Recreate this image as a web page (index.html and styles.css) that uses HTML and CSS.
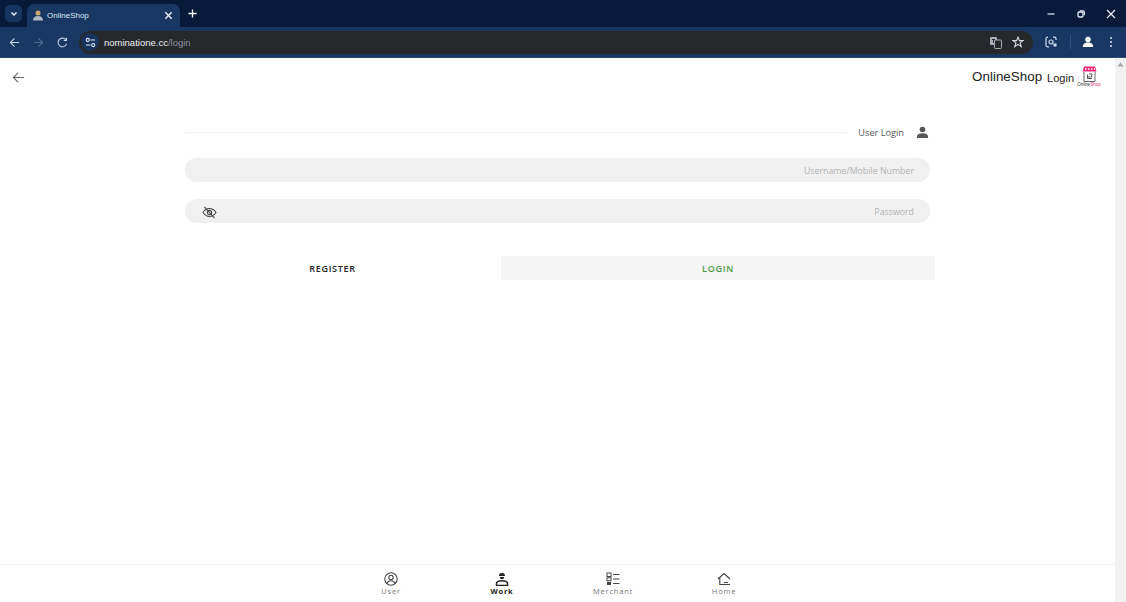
FILE: index.html
```html
<!DOCTYPE html>
<html lang="en">
<head>
<meta charset="utf-8">
<title>OnlineShop</title>
<link rel="stylesheet" href="styles.css">
</head>
<body>
<div class="browser">
  <div class="tabstrip">
    <div class="tab-search"><svg width="10" height="10" viewBox="0 0 10 10"><path d="M2.500 3.500 5 6 7.500 3.500" fill="none" stroke="#e8eefa" stroke-width="1.500"/></svg></div>
    <div class="tab">
      <svg class="favicon" width="10" height="11" viewBox="0 0 10 11"><circle cx="5" cy="3" r="2.500" fill="#c9a66b"/><path d="M0 10.500C0 7.500 2 6 5 6s5 1.500 5 4.500z" fill="#aeb7c4"/></svg>
      <span class="tab-title">OnlineShop</span>
      <svg class="tab-close" width="9" height="9" viewBox="0 0 10 10"><path d="M1.500 1.500 8.500 8.500M8.500 1.500 1.500 8.500" stroke="#f0f4fb" stroke-width="1.500"/></svg>
    </div>
    <svg class="tab-new" width="9" height="9" viewBox="0 0 10 10"><path d="M5 .5v9M.5 5h9" stroke="#fff" stroke-width="1.500"/></svg>
    <div class="win-controls">
      <svg width="10" height="10" viewBox="0 0 10 10"><path d="M1.500 5h7" stroke="#e8eefa" stroke-width="1.200"/></svg>
      <svg width="10" height="10" viewBox="0 0 10 10"><rect x="2" y="3" width="5" height="5" rx="1.200" fill="none" stroke="#e8eefa" stroke-width="1.300"/><path d="M3.800 1.800h3a1.500 1.500 0 0 1 1.500 1.500v3" fill="none" stroke="#e8eefa" stroke-width="1.200"/></svg>
      <svg width="10" height="10" viewBox="0 0 10 10"><path d="M1 1 9 9M9 1 1 9" stroke="#e8eefa" stroke-width="1.200"/></svg>
    </div>
  </div>
  <div class="toolbar">
    <svg class="tb-icon nav" width="11" height="11" viewBox="0 0 12 12"><path d="M11 6H1.500M6 1.500 1.500 6 6 10.500" fill="none" stroke="#c8d4e8" stroke-width="1.200"/></svg>
    <svg class="tb-icon nav" width="11" height="11" viewBox="0 0 12 12"><path d="M1 6h9.500M6 1.500 10.500 6 6 10.500" fill="none" stroke="#4f6a92" stroke-width="1.200"/></svg>
    <svg class="tb-icon nav reload" width="11" height="11" viewBox="0 0 12 12"><path d="M10.400 7.500A4.700 4.700 0 1 1 9.500 2.800M10.300 .8v3h-3" fill="none" stroke="#c8d4e8" stroke-width="1.200"/></svg>
    <div class="omnibox">
      <span class="site-chip"><svg width="11" height="11" viewBox="0 0 12 12"><circle cx="3" cy="3.200" r="1.700" fill="none" stroke="#e8eefa" stroke-width="1.100"/><path d="M6 3.200h5M1 8.800h5" stroke="#e8eefa" stroke-width="1.200"/><circle cx="9" cy="8.800" r="1.700" fill="none" stroke="#e8eefa" stroke-width="1.100"/></svg></span>
      <span class="url">nominatione.cc<span class="url-path">/login</span></span>
      <svg class="omni-icon translate" width="13" height="13" viewBox="0 0 13 13"><rect x="1" y="1" width="7" height="8" rx="1" fill="#a8aeb8"/><rect x="5.500" y="4" width="7" height="8.500" rx="1" fill="#26282c" stroke="#a8aeb8"/><path d="M3 3.500h3M4.500 3v4" stroke="#2a2c30"/></svg>
      <svg class="omni-icon star" width="12" height="12" viewBox="0 0 13 13"><path d="M6.500 1.200 8 5h4l-3.200 2.500 1.200 4-3.500-2.400L3 11.500l1.200-4L1 5h4z" fill="none" stroke="#d8dce4" stroke-width="1.200"/></svg>
    </div>
    <svg class="tb-icon ext" width="12" height="12" viewBox="0 0 12 12"><path d="M3 1.200H2.500A1.500 1.500 0 0 0 1 2.700v6.600a1.500 1.500 0 0 0 1.500 1.500H4M8 1.200h1.500A1.500 1.500 0 0 1 11 2.700V4" fill="none" stroke="#cfdcf2" stroke-width="1.200"/><circle cx="6" cy="6" r="2" fill="none" stroke="#cfdcf2" stroke-width="1.200"/><path d="M8.500 7.500h3v3h-3z" fill="#cfdcf2"/></svg>
    <span class="tb-sep"></span>
    <svg class="tb-icon profile" width="12" height="12" viewBox="0 0 12 12"><circle cx="6" cy="3.500" r="2.700" fill="#fff"/><path d="M.8 11c0-3 2.400-4.400 5.200-4.400s5.200 1.400 5.200 4.400z" fill="#fff"/></svg>
    <svg class="tb-icon menu" width="12" height="12" viewBox="0 0 12 12"><circle cx="6" cy="2" r="1" fill="#dfe7f5"/><circle cx="6" cy="6" r="1" fill="#dfe7f5"/><circle cx="6" cy="10" r="1" fill="#dfe7f5"/></svg>
  </div>
  <div class="viewport">
    <main class="page">
      <header class="topbar">
        <svg class="back" width="13" height="13" viewBox="0 0 14 14"><path d="M13 7H1.500M6.500 2 1.500 7l5 5" fill="none" stroke="#666" stroke-width="1.200"/></svg>
        <div class="brand">
          <span class="brand-name">OnlineShop</span>
          <span class="brand-login">Login</span>
          <div class="logo">
            <svg width="15" height="16" viewBox="0 0 15 16"><path d="M2 .5h11l1.500 5H.5z" fill="#ee2a78"/><path d="M3 3h1.500M6 3h1.500M9 3h1.500M12 3h1" stroke="#fff" stroke-width="1.400"/><path d="M2 6v9.500h11V6" fill="none" stroke="#666" stroke-width="1"/><path d="M5.500 8.500v4h4.500M7 8h3l-.5 3H6" fill="none" stroke="#444" stroke-width=".9"/></svg>
            <span class="logo-text">Online<span class="logo-pink">Shop</span></span>
          </div>
        </div>
      </header>
      <section class="login">
        <div class="login-title">
          <span class="rule"></span>
          <span class="title-text">User Login</span>
          <svg width="13" height="13" viewBox="0 0 14 14"><circle cx="7" cy="3.800" r="3" fill="#555"/><path d="M1 13v-1.500C1 9 3.500 7.800 7 7.800s6 1.200 6 3.700V13z" fill="#555"/></svg>
        </div>
        <div class="field"><span class="placeholder">Username/Mobile Number</span></div>
        <div class="field">
          <svg class="eye" width="15" height="13" viewBox="0 0 16 14"><path d="M1 7c1.800-2.800 4-4.200 7-4.200s5.200 1.400 7 4.200c-1.800 2.800-4 4.200-7 4.200S2.800 9.800 1 7z" fill="none" stroke="#444" stroke-width="1.100"/><circle cx="8" cy="7" r="2.300" fill="none" stroke="#444" stroke-width="1.100"/><path d="M2.500 1 13.500 13" stroke="#444" stroke-width="1.100"/></svg>
          <span class="placeholder">Password</span>
        </div>
        <div class="actions">
          <div class="btn btn-register">REGISTER</div>
          <div class="btn btn-login">LOGIN</div>
        </div>
      </section>
      <nav class="tabbar">
        <div class="tab-item">
          <svg width="14" height="14" viewBox="0 0 14 14"><circle cx="7" cy="7" r="6.200" fill="none" stroke="#444" stroke-width="1.100"/><circle cx="7" cy="5.500" r="2.200" fill="none" stroke="#444" stroke-width="1.100"/><path d="M2.800 11.500c.8-1.800 2.200-2.700 4.200-2.700s3.400.9 4.200 2.700" fill="none" stroke="#444" stroke-width="1.100"/></svg>
          <span>User</span>
        </div>
        <div class="tab-item active">
          <svg width="14" height="14" viewBox="0 0 14 14"><path d="M4 4a3 3 0 0 1 6 0z" fill="#222"/><path d="M4.800 5h4.400a2.200 2.200 0 0 1-4.400 0z" fill="#222"/><path d="M1.500 13.500v-1.800c0-2 2.500-3 5.500-3s5.500 1 5.500 3v1.800z" fill="none" stroke="#222" stroke-width="1.500"/></svg>
          <span>Work</span>
        </div>
        <div class="tab-item">
          <svg width="14" height="14" viewBox="0 0 14 14"><rect x="1" y="1" width="4" height="3.500" fill="none" stroke="#444"/><rect x="1" y="5.800" width="4" height="3" fill="none" stroke="#444"/><rect x="1" y="10" width="4" height="3" fill="#444"/><path d="M7 2.500h6.500M7 7h6.500M7 11.500h6.500" stroke="#444" stroke-width="1.100"/></svg>
          <span>Merchant</span>
        </div>
        <div class="tab-item">
          <svg width="14" height="14" viewBox="0 0 14 14"><path d="M1 7 7 1.500 13 7M2.800 6v6.500H13M7 10.500h4" fill="none" stroke="#444" stroke-width="1.100"/></svg>
          <span>Home</span>
        </div>
      </nav>
    </main>
    <aside class="scrollbar"><svg width="7" height="5" viewBox="0 0 7 5"><path d="M3.500 .5 6.500 4.500H.5z" fill="#a3a3a3"/></svg></aside>
  </div>
</div>
</body>
</html>
```
FILE: styles.css
```css
* { box-sizing: border-box; }
html, body { margin: 0; height: 100%; overflow: hidden; }
body { font-family: "Open Sans", "Noto Sans", sans-serif; background: #fff; }
.browser { display: flex; flex-direction: column; height: 602px; }

.tabstrip { height: 27px; flex: none; display: flex; align-items: flex-end; background: #071a3a; font-family: "Liberation Sans", sans-serif; }
.tab-search { width: 17px; height: 17px; margin: 0 5px 5px 5px; border-radius: 5px; background: #173460; display: flex; align-items: center; justify-content: center; }
.tab { width: 153px; height: 23px; background: #1a3763; border-radius: 7px 7px 0 0; display: flex; align-items: center; padding: 0 6px; color: #dbe5f5; font-size: 8px; }
.favicon { margin-right: 4px; }
.tab-title { flex: 1; }
.tab-close { margin-right: 1px; }
.tab-new { margin: 0 0 9px 8px; }
.win-controls { margin: 0 10px 8px auto; display: flex; gap: 20px; }

.toolbar { height: 31px; flex: none; display: flex; align-items: center; padding-left: 9px; background: #1a3763; border-bottom: 1px solid #2e4a73; }
.tb-icon { flex: none; margin-right: 12px; }
.nav { margin-right: 13px; }
.reload { margin-right: 11px; }
.omnibox { width: 954px; height: 23px; margin-right: 12px; flex: none; display: flex; align-items: center; border-radius: 12px; background: #26282c; }
.site-chip { width: 18px; height: 18px; margin: 0 5px 0 2px; border-radius: 50%; background: #173460; display: flex; align-items: center; justify-content: center; }
.url { flex: 1; color: #f0f2f5; font-family: "Liberation Sans", sans-serif; font-size: 9.500px; }
.url-path { color: #8d939c; }
.translate { margin-right: 10px; }
.star { margin-right: 9px; }
.ext { margin-right: 13px; }
.tb-sep { width: 1px; height: 14px; background: #35507a; margin-right: 11px; }
.profile { margin-right: 11px; }
.menu { margin-right: 0; }

.viewport { flex: 1; display: flex; min-height: 0; }
.page { flex: 1; min-width: 0; display: flex; flex-direction: column; }
.scrollbar { width: 11px; flex: none; background: #f1f1f1; padding: 4px 2px; display: flex; justify-content: center; align-items: flex-start; }

.topbar { height: 45px; flex: none; display: flex; align-items: flex-start; justify-content: space-between; padding: 13px 15px 0 12px; }
.brand { display: flex; align-items: flex-start; font-family: "Liberation Sans", sans-serif; color: #222; margin-top: -4px; }
.brand-name { font-size: 13.400px; line-height: 20px; }
.brand-login { font-size: 11px; line-height: 16px; margin: 3px 4px 0 5px; }
.logo { display: flex; flex-direction: column; align-items: center; width: 22px; margin-top: -1px; }
.logo-text { font-size: 4.500px; line-height: 5px; color: #333; white-space: nowrap; }
.logo-pink { color: #ee2a78; }

.login { width: 745px; margin-left: 185px; flex: 1; }
.login-title { display: flex; align-items: center; height: 18px; margin-top: 20px; padding-right: 1px; color: #555; font-size: 9.200px; }
.rule { flex: 1; height: 1px; background: #f0f0f0; }
.title-text { margin: 0 12px 0 11px; }
.field { height: 24px; margin-top: 17px; padding: 0 16px; display: flex; align-items: center; border-radius: 12px; background: #f0f0f0; }
.placeholder { margin-left: auto; padding-top: 2px; color: #b3b3b3; font-size: 8.800px; }
.eye { margin: 3px auto 0 1px; }
.actions { display: flex; align-items: center; width: 750px; margin-top: 33px; }
.btn { height: 24px; display: flex; align-items: center; justify-content: center; font-size: 9px; letter-spacing: .7px; font-weight: 600; }
.btn-register { width: 295px; margin-right: 21px; color: #222; }
.btn-login { width: 434px; background: #f5f5f5; color: #4a9d3f; }

.tabbar { height: 38px; flex: none; display: flex; justify-content: center; border-top: 1px solid #f0f0f0; }
.tab-item { width: 111px; display: flex; flex-direction: column; align-items: center; padding-top: 7px; color: #777; font-size: 7.500px; line-height: 10px; letter-spacing: .8px; font-weight: 500; }
.tab-item.active { color: #222; font-weight: 700; }
```
